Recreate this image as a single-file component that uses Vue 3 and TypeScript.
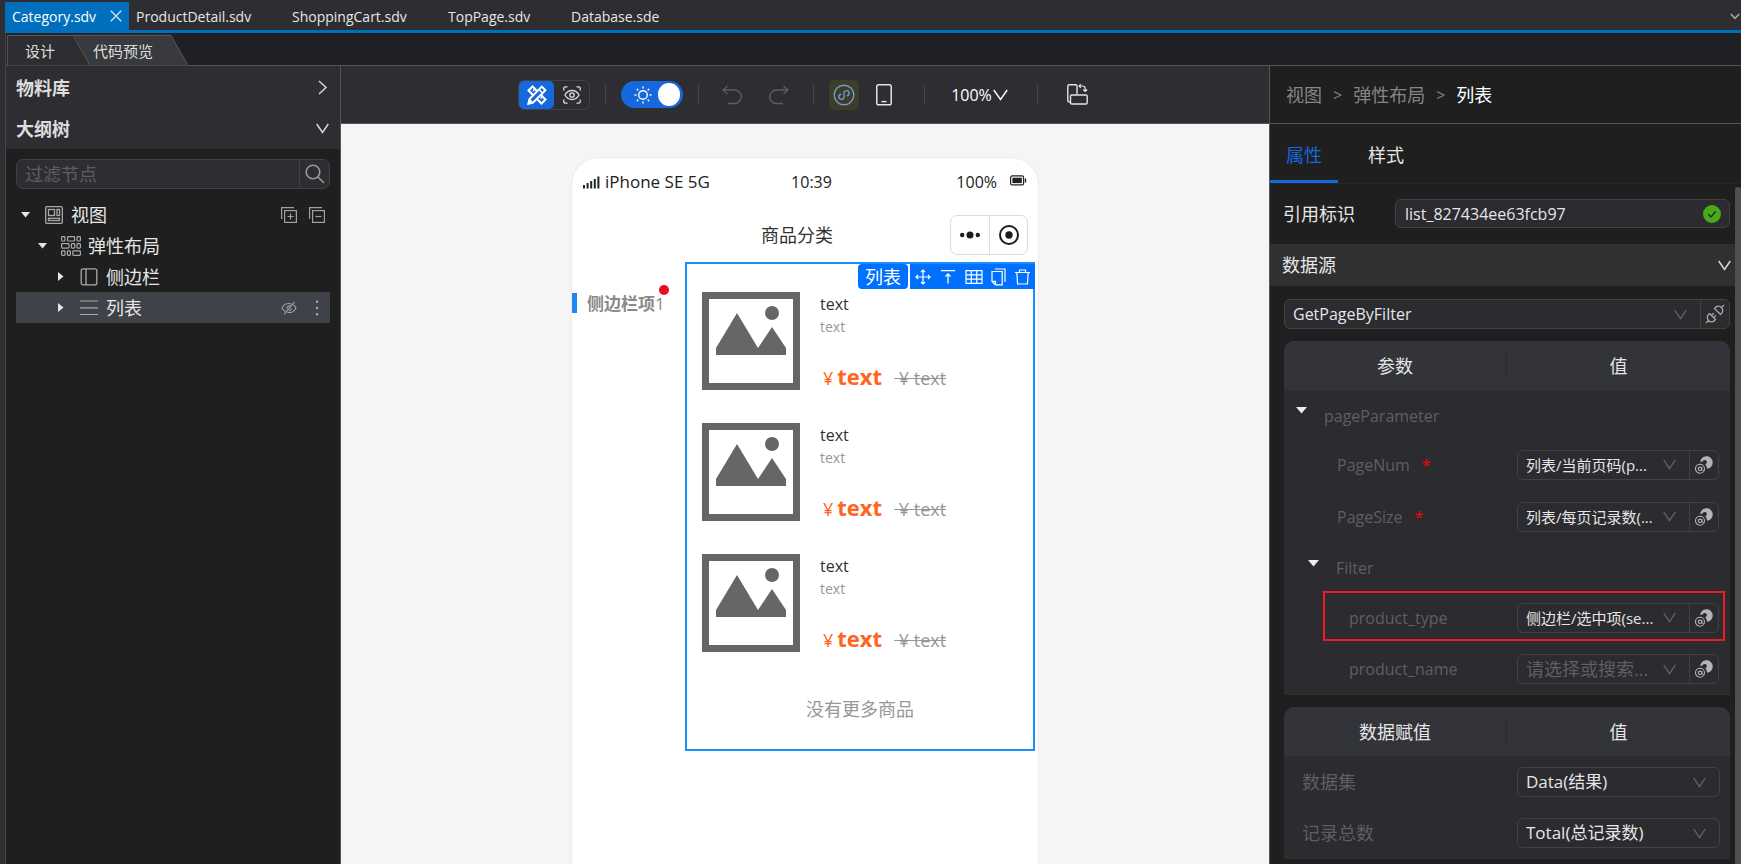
<script setup lang="ts">
import { ref } from 'vue'

interface FileTab { name: string; kind: string }
interface ParamRow { label: string; level: number; group?: boolean; required?: boolean; value?: string; muted?: boolean; marked?: boolean }

const files: FileTab[] = [
  { name: 'ProductDetail.sdv', kind: 'f1' },
  { name: 'ShoppingCart.sdv', kind: 'f2' },
  { name: 'TopPage.sdv', kind: 'f3' },
  { name: 'Database.sde', kind: 'f4' },
]

const params: ParamRow[] = [
  { label: 'pageParameter', level: 1, group: true },
  { label: 'PageNum', level: 2, required: true, value: '列表/当前页码(p...' },
  { label: 'PageSize', level: 2, required: true, value: '列表/每页记录数(...' },
  { label: 'Filter', level: 2, group: true },
  { label: 'product_type', level: 3, value: '侧边栏/选中项(se...', marked: true },
  { label: 'product_name', level: 3, value: '请选择或搜索...', muted: true },
]

const assigns = [
  { label: '数据集', value: 'Data(结果)' },
  { label: '记录总数', value: 'Total(总记录数)' },
]

const filterText = ref('')
const refId = ref('list_827434ee63fcb97')
const lightMode = ref(true)
</script>

<template>
  <div class="app">
    <nav class="files">
      <div class="file active">
        <a href="#">Category.sdv</a>
        <button class="plain" aria-label="关闭">
          <svg width="12" height="12" viewBox="0 0 12 12"><path d="M.8.8l10.4 10.4M11.2.8L.8 11.2" stroke="#cfe6f7" stroke-width="1.3" /></svg>
        </button>
      </div>
      <a v-for="f in files" :key="f.name" href="#" class="file" :class="f.kind">{{ f.name }}</a>
      <button class="plain more" aria-label="更多">
        <svg width="10" height="7" viewBox="0 0 10 7"><path d="M.8 1l4.2 4.4L9.2 1" fill="none" stroke="#a5a5a8" stroke-width="1.6" /></svg>
      </button>
    </nav>

    <div class="work">
      <div class="modes">
        <svg class="mode-shape" width="184" height="32" viewBox="0 0 184 32">
          <path d="M1 .5H67L84 31.5H1z" fill="#2d2d32" />
          <path d="M67 .5H165L182 31.5H84z" fill="#383a3e" />
          <path d="M1.500 32V1.500H165L182 31.500M67 1.500L84 31.500" fill="none" stroke="#55555a" />
        </svg>
        <div class="mode-list">
          <button class="plain">设计</button>
          <button class="plain second">代码预览</button>
        </div>
      </div>

      <div class="body">
        <aside class="left">
          <div class="heads">
            <button class="plain head">物料库
              <svg width="13" height="15" viewBox="0 0 13 15"><path d="M3 1l7 6.500L3 14" fill="none" stroke="#ddd" stroke-width="1.400" /></svg>
            </button>
            <button class="plain head">大纲树
              <svg width="13" height="11" viewBox="0 0 13 11"><path d="M.7 1l5.800 8.500L12.300 1" fill="none" stroke="#ddd" stroke-width="1.400" /></svg>
            </button>
          </div>
          <div class="search">
            <input v-model="filterText" type="text" placeholder="过滤节点" aria-label="过滤节点">
            <button class="plain" aria-label="搜索">
              <svg width="20" height="20" viewBox="0 0 20 20" fill="none" stroke="#9a9a9a" stroke-width="1.600"><circle cx="8" cy="8" r="6.800" /><path d="M13 13l6 6" /></svg>
            </button>
          </div>
          <ul class="tree">
            <li class="n1">
              <svg class="caret" width="9" height="6" viewBox="0 0 9 6"><path d="M0 0h9L4.500 5.500z" fill="#e6e6e6" /></svg>
              <svg class="ico" width="18" height="18" viewBox="0 0 18 18" fill="none" stroke="#a9a9a9" stroke-width="1.300"><rect x=".7" y=".7" width="16.600" height="16.600" rx="1" /><rect x="3.500" y="3.500" width="6" height="6" /><rect x="12" y="3.500" width="2.500" height="6" /><rect x="3.500" y="12.300" width="11" height="2.200" /></svg>
              <span>视图</span>
              <button class="plain tool first" aria-label="展开全部">
                <svg width="16" height="16" viewBox="0 0 16 16" fill="none" stroke="#a0a0a0" stroke-width="1.200"><path d="M.6 12V.6H13" /><rect x="3.600" y="3.600" width="11.800" height="11.800" /><path d="M9.500 6.500v6M6.500 9.500h6" /></svg>
              </button>
              <button class="plain tool" aria-label="收起全部">
                <svg width="16" height="16" viewBox="0 0 16 16" fill="none" stroke="#a0a0a0" stroke-width="1.200"><path d="M.6 12V.6H13" /><rect x="3.600" y="3.600" width="11.800" height="11.800" /><path d="M6.500 9.500h6" /></svg>
              </button>
            </li>
            <li class="n2">
              <svg class="caret" width="9" height="6" viewBox="0 0 9 6"><path d="M0 0h9L4.500 5.500z" fill="#e6e6e6" /></svg>
              <svg class="ico" width="20" height="20" viewBox="0 0 20 20" fill="none" stroke="#a9a9a9" stroke-width="1.200"><rect x=".6" y=".6" width="3.400" height="4.400" rx=".8" /><rect x="6.600" y=".6" width="7" height="4.400" rx=".8" /><rect x="16" y=".6" width="3.400" height="4.400" rx=".8" /><rect x=".6" y="7.700" width="7.400" height="4.400" rx=".8" /><rect x="10.400" y="7.700" width="3.400" height="4.400" rx=".8" /><rect x="16" y="7.700" width="3.400" height="4.400" rx=".8" /><rect x=".6" y="14.900" width="3.400" height="4.400" rx=".8" /><rect x="6.400" y="14.900" width="3" height="4.400" rx=".8" /><rect x="11.800" y="14.900" width="7.600" height="4.400" rx=".8" /></svg>
              <span>弹性布局</span>
            </li>
            <li class="n3">
              <svg class="caret" width="6" height="9" viewBox="0 0 6 9"><path d="M0 0v9L5.500 4.500z" fill="#e6e6e6" /></svg>
              <svg class="ico" width="18" height="18" viewBox="0 0 18 18" fill="none" stroke="#a9a9a9" stroke-width="1.300"><rect x="1.200" y=".9" width="15.600" height="16" rx="2" /><path d="M6 1v16" /></svg>
              <span>侧边栏</span>
            </li>
            <li class="n3 selected">
              <svg class="caret" width="6" height="9" viewBox="0 0 6 9"><path d="M0 0v9L5.500 4.500z" fill="#e6e6e6" /></svg>
              <svg class="ico" width="18" height="18" viewBox="0 0 18 18" stroke="#a9a9a9" stroke-width="1.200"><path d="M0 2h18M0 8.800h18M0 15.500h18" /></svg>
              <span>列表</span>
              <button class="plain tool first" aria-label="隐藏">
                <svg width="16" height="14" viewBox="0 0 16 14" fill="none" stroke="#a0a0a0" stroke-width="1.100"><path d="M10.500 3C6 1.600 2.500 4 1 7c.8 1.500 1.800 2.700 3.200 3.500M12.300 3.700C13.600 4.500 14.500 5.700 15 7c-1.500 3.200-5 5.200-8.700 4.200M13.500.8L3.200 13.200M9.800 5.400C8 4 5.500 5.500 6 7.800M10.200 7.200c0 1.400-1 2.400-2.400 2.400" /></svg>
              </button>
              <button class="plain tool" aria-label="更多操作">
                <svg width="16" height="16" viewBox="0 0 16 16" fill="#a9a9a9"><circle cx="8" cy="1.800" r="1.200" /><circle cx="8" cy="8" r="1.200" /><circle cx="8" cy="14.200" r="1.200" /></svg>
              </button>
            </li>
          </ul>
        </aside>

        <main class="center">
          <div class="toolbar">
            <div class="switcher">
              <button class="plain on" aria-label="设计模式">
                <svg width="20" height="20" viewBox="0 0 20 20" fill="none" stroke="#fff" stroke-width="2"><path d="M1.500 5.500l4-4 13 13-4 4z" /><path d="M8 4l-2 2M15.500 11.500l-2 2" stroke-width="1.400" /><path d="M14.800 1.600l3.600 3.600L6 17.600l-4.600 1.200L2.500 14z" fill="#1668dc" /><path d="M12 4.500L15.500 8M1.500 18.500l1-4 3 3z" stroke-width="1.500" fill="#fff" /></svg>
              </button>
              <button class="plain" aria-label="预览模式">
                <svg width="18" height="18" viewBox="0 0 18 18" fill="none" stroke="#ddd" stroke-width="1.300"><path d="M.8 4.500V2.300A1.500 1.500 0 0 1 2.300.8h2.200M13.500.8h2.200a1.500 1.500 0 0 1 1.500 1.500v2.200M17.200 13.500v2.200a1.500 1.500 0 0 1-1.500 1.500h-2.200M4.500 17.200H2.300a1.500 1.500 0 0 1-1.500-1.500v-2.200" /><path d="M2 9c3-6 11-6 14 0-3 6-11 6-14 0z" /><circle cx="9" cy="9" r="2.200" /></svg>
              </button>
            </div>
            <i class="sep s1"></i>
            <label class="toggle">
              <input v-model="lightMode" type="checkbox" aria-label="亮色模式">
              <svg width="18" height="18" viewBox="0 0 18 18" fill="none" stroke="#fff" stroke-width="1.400" stroke-linecap="round"><circle cx="9" cy="9" r="4.300" /><path d="M9 1v1M9 16v1M1 9h1M16 9h1M3.300 3.300l.6.6M14.100 14.100l.6.6M14.700 3.300l-.6.6M3.900 14.100l-.6.6" /></svg>
              <b></b>
            </label>
            <i class="sep s2"></i>
            <button class="plain undo" aria-label="撤销">
              <svg width="20" height="20" viewBox="0 0 20 20" fill="none" stroke="#5d5d60" stroke-width="1.400"><path d="M5.500 1L1 5l4.500 4M1 5h11.500a6.700 6.700 0 0 1 0 13.500H6" /></svg>
            </button>
            <button class="plain redo" aria-label="重做">
              <svg width="20" height="20" viewBox="0 0 20 20" fill="none" stroke="#5d5d60" stroke-width="1.400"><path d="M14.500 1L19 5l-4.500 4M19 5H7.500a6.700 6.700 0 0 0 0 13.500H14" /></svg>
            </button>
            <i class="sep s3"></i>
            <button class="plain mini" aria-label="小程序">
              <svg width="22" height="22" viewBox="0 0 22 22" fill="none" stroke="#7294d8" stroke-width="1.400"><circle cx="11" cy="11" r="9.800" /><path d="M8.300 10.200a2.600 2.600 0 1 0 2.700 3.100V8.700a2.600 2.600 0 1 1 2.700 3.100" /></svg>
            </button>
            <button class="plain device" aria-label="手机">
              <svg width="16" height="22" viewBox="0 0 16 22" fill="none" stroke="#e4e4e4" stroke-width="1.500"><rect x=".8" y=".8" width="14.400" height="20" rx="1.800" /><path d="M5.500 17.600h5" /></svg>
            </button>
            <i class="sep s4"></i>
            <button class="plain zoom">100%
              <svg width="15" height="12" viewBox="0 0 15 12"><path d="M.8 1l6.700 9.500L14.200 1" fill="none" stroke="#fff" stroke-width="1.400" /></svg>
            </button>
            <i class="sep s5"></i>
            <button class="plain rotate" aria-label="旋转">
              <svg width="21" height="21" viewBox="0 0 21 21" fill="none" stroke="#e4e4e4" stroke-width="1.400"><path d="M10 10V2.200A1.400 1.400 0 0 0 8.600.8H2.200A1.400 1.400 0 0 0 .8 2.200v14.400A1.400 1.400 0 0 0 2.200 18h.8" /><rect x="3.500" y="11" width="16.700" height="9" rx="1.300" /><path d="M12 2h3.500c1.800 0 2.700 1 2.700 2.700V7M13.800.3L12 2l1.800 1.800M16.200 5.500l2 2 2-2" stroke-width="1.200" /></svg>
            </button>
          </div>

          <div class="canvas">
            <div class="phone">
              <div class="status">
                <svg width="17" height="13" viewBox="0 0 17 13" fill="#222"><rect y="9" width="2" height="3.500" /><rect x="3.600" y="7" width="2" height="5.500" /><rect x="7.200" y="5" width="2" height="7.500" /><rect x="10.800" y="3" width="2" height="9.500" /><rect x="14.400" y=".5" width="2" height="12" /></svg>
                <span class="carrier">iPhone SE 5G</span>
                <span class="clock">10:39</span>
                <span class="power">100%</span>
                <svg class="battery" width="17" height="11" viewBox="0 0 17 11"><rect x=".6" y=".9" width="13" height="9" rx="1.500" fill="none" stroke="#222" stroke-width="1.200" /><rect x="2.400" y="2.700" width="9.400" height="5.400" fill="#222" /><path d="M15.500 3.500v4" stroke="#222" stroke-width="1.300" /></svg>
              </div>
              <div class="titlebar">
                <h1>商品分类</h1>
                <div class="capsule">
                  <button class="plain" aria-label="菜单"><svg width="20" height="8" viewBox="0 0 20 8" fill="#1c1c1c"><circle cx="2.200" cy="4" r="2.200" /><circle cx="10" cy="4" r="3.500" /><circle cx="17.800" cy="4" r="2.200" /></svg></button>
                  <button class="plain" aria-label="关闭小程序"><svg width="20" height="20" viewBox="0 0 20 20"><circle cx="10" cy="10" r="9" fill="none" stroke="#1c1c1c" stroke-width="2" /><circle cx="10" cy="10" r="3.700" fill="#1c1c1c" /></svg></button>
                </div>
              </div>
              <div class="stage">
                <div class="side">
                  <span class="side-item"><strong>侧边栏项</strong>1<i class="dot"></i></span>
                </div>
                <section class="list">
                  <div class="badge">
                    <span>列表</span>
                    <div class="ops">
                      <button class="plain" aria-label="移动"><svg width="16" height="16" viewBox="0 0 16 16" fill="none" stroke="#fff" stroke-width="1.200"><path d="M8 1v14M1 8h14M6 3l2-2 2 2M6 13l2 2 2-2M3 6L1 8l2 2M13 6l2 2-2 2" /></svg></button>
                      <button class="plain" aria-label="上移"><svg width="16" height="16" viewBox="0 0 16 16" fill="none" stroke="#fff" stroke-width="1.300"><path d="M1 1.700h14M8 14.500V5M5.500 7.500L8 5l2.500 2.500" /></svg></button>
                      <button class="plain" aria-label="表格"><svg width="18" height="16" viewBox="0 0 18 16" fill="none" stroke="#fff" stroke-width="1.200"><path d="M1 1.600h16v12.800H1zM1 5.800h16M1 10.100h16M6.300 1.600v12.800M11.700 1.600v12.800" /></svg></button>
                      <button class="plain" aria-label="复制"><svg width="15" height="18" viewBox="0 0 15 18" fill="none" stroke="#fff" stroke-width="1.200"><path d="M4 1h10v13M1 3.500h10.200v13.300H4.500L1 13.400zM1 13.400h3.500v3.400" /></svg></button>
                      <button class="plain" aria-label="删除"><svg width="15" height="16" viewBox="0 0 15 16" fill="none" stroke="#fff" stroke-width="1.200"><path d="M0 3.500h15M4.500 3.500V1h6v2.500M1.800 3.500L2.600 15h9.800l.8-11.500" /></svg></button>
                    </div>
                  </div>
                  <article v-for="n in 3" :key="n" class="goods">
                    <svg class="pic" width="98" height="98" viewBox="0 0 14 14"><rect x=".5" y=".5" width="13" height="13" fill="#fff" stroke="#666" /><path d="M2 9V8l3-5 3 5 2-3 2 3v1z" fill="#666" /><circle cx="10" cy="3" r="1" fill="#666" /></svg>
                    <div class="info">
                      <h2>text</h2>
                      <p>text</p>
                      <div class="price"><small>¥</small><strong>text</strong><del>&nbsp;¥ text</del></div>
                    </div>
                  </article>
                  <p class="end">没有更多商品</p>
                </section>
              </div>
            </div>
          </div>
        </main>

        <aside class="right">
          <nav class="crumbs"><a href="#">视图</a><i>&gt;</i><a href="#">弹性布局</a><i>&gt;</i><a href="#" class="here">列表</a></nav>
          <div class="tabs"><button class="plain current">属性</button><button class="plain">样式</button></div>
          <div class="panel">
            <div class="props">
              <div class="ident">
                <label for="ident">引用标识</label>
                <div class="ident-box">
                  <input id="ident" v-model="refId" type="text">
                  <svg width="18" height="18" viewBox="0 0 18 18"><circle cx="9" cy="9" r="9" fill="#49aa19" /><path d="M5.300 9.200l2.600 2.700 4.800-5.600" fill="none" stroke="#1f2b1a" stroke-width="1.400" /></svg>
                </div>
              </div>
              <button class="plain section">数据源
                <svg width="13" height="11" viewBox="0 0 13 11"><path d="M.7 1l5.800 8.500L12.300 1" fill="none" stroke="#ddd" stroke-width="1.400" /></svg>
              </button>
              <div class="source combo">
                <div class="pick">
                  <select aria-label="数据源"><option>GetPageByFilter</option></select>
                  <svg width="13" height="11" viewBox="0 0 13 11"><path d="M.7 1l5.800 8.500L12.300 1" fill="none" stroke="#66666a" stroke-width="1.300" /></svg>
                </div>
                <button class="plain" aria-label="连接">
                  <svg width="20" height="20" viewBox="0 0 20 20" fill="none" stroke="#aaa" stroke-width="1.300"><path d="M1 19l2.500-2.500M19 1l-2.500 2.500M4.500 9.500l6 6c-2 2.600-5 3.300-7 1s-1.500-5 1-7zM15.500 10.500l-6-6c2-2.600 5-3.300 7-1s1.500 5-1 7zM6.500 11.500l2.300-2.300M8.700 13.700l2.300-2.300" /></svg>
                </button>
              </div>

              <table>
                <thead><tr><th>参数</th><th>值</th></tr></thead>
                <tbody>
                  <tr v-for="p in params" :key="p.label" :class="{ group: p.group }">
                    <td :class="'level' + p.level">
                      <div class="name">
                        <button v-if="p.group" class="plain fold" aria-label="折叠"><svg width="11" height="7" viewBox="0 0 11 7"><path d="M0 0h11L5.500 6.500z" fill="#eee" /></svg></button>
                        <label :for="p.label">{{ p.label }}</label>
                        <em v-if="p.required">*</em>
                      </div>
                      <i v-if="p.marked" class="mark"></i>
                    </td>
                    <td>
                      <div v-if="p.value" class="combo small" :class="{ muted: p.muted }">
                        <div class="pick">
                          <select :id="p.label"><option>{{ p.value }}</option></select>
                          <svg width="13" height="11" viewBox="0 0 13 11"><path d="M.7 1l5.800 8.500L12.300 1" fill="none" stroke="#66666a" stroke-width="1.300" /></svg>
                        </div>
                        <button class="plain" aria-label="绑定">
                          <svg width="18" height="18" viewBox="0 0 18 18"><path d="M5.500 4.500a6.300 6.300 0 1 1 6.500 8.300 6 6 0 0 0-1.800-4.500c1.800-.7 2.300-3 .6-4.100-1.500-.8-3 0-3.400 1.600-.7-.2-1.300-.2-2.300 0 0-.5.200-.9.400-1.300z" fill="#b4b4b4" /><circle cx="5" cy="12.800" r="4.500" fill="none" stroke="#b4b4b4" stroke-width="1.100" /><circle cx="5" cy="12.800" r="1.700" fill="none" stroke="#b4b4b4" stroke-width="1.100" /><path d="M6.900 11v2.600c0 1 1.500 1.200 2 .2" fill="none" stroke="#b4b4b4" /></svg>
                        </button>
                      </div>
                    </td>
                  </tr>
                </tbody>
              </table>

              <table class="assign">
                <thead><tr><th>数据赋值</th><th>值</th></tr></thead>
                <tbody>
                  <tr v-for="a in assigns" :key="a.label">
                    <td><label :for="a.label">{{ a.label }}</label></td>
                    <td>
                      <div class="combo">
                        <div class="pick">
                          <select :id="a.label"><option>{{ a.value }}</option></select>
                          <svg width="13" height="11" viewBox="0 0 13 11"><path d="M.7 1l5.800 8.500L12.300 1" fill="none" stroke="#66666a" stroke-width="1.300" /></svg>
                        </div>
                      </div>
                    </td>
                  </tr>
                </tbody>
              </table>
            </div>
            <div class="scroll"><i></i></div>
          </div>
        </aside>
      </div>
    </div>
  </div>
</template>

<style>
html, body { margin: 0; background: #2d2d32; }
</style>

<style scoped>
* { box-sizing: border-box; }
.app { height: 100vh; overflow: hidden; display: flex; flex-direction: column; background: #2d2d32; color: #e6e6e6; font: 18px/24px "Open Sans", "Noto Sans CJK SC", sans-serif; }
.plain { background: none; border: 0; padding: 0; margin: 0; font: inherit; color: inherit; display: flex; align-items: center; justify-content: center; cursor: pointer; flex: none; }
svg { display: block; flex: none; }
i, em { font-style: normal; }
a { color: inherit; text-decoration: none; }
h1, h2, p, ul { margin: 0; padding: 0; font-weight: 400; }
input, select { font: inherit; color: inherit; outline: 0; border: 0; background: none; min-width: 0; margin: 0; }

.files { display: flex; flex: none; height: 33px; margin-left: 5px; padding-top: 2px; border-bottom: 3px solid #006fbd; box-shadow: 0 1px #47474b; font-size: 14px; line-height: 30px; }
.file { height: 28px; }
.file.active { display: flex; background: #006fbd; width: 124px; padding: 0 7px; justify-content: space-between; color: #fff; }
.f1 { margin-left: 7px; width: 156px; }
.f2 { width: 156px; }
.f3 { width: 123px; }
.more { margin: 0 1px 0 auto; }

.work { flex: 1; min-height: 0; margin-left: 5px; border-left: 1px solid #47474b; display: flex; flex-direction: column; }
.modes { display: grid; flex: none; height: 33px; padding-top: 1px; background: #1f2023; border-bottom: 1px solid #55555a; }
.mode-shape, .mode-list { grid-area: 1 / 1; }
.mode-list { display: flex; align-items: center; padding: 2px 0 0 19px; font-size: 15px; color: #ddd; }
.second { margin-left: 38px; }
.body { flex: 1; min-height: 0; display: flex; }

.left { flex: none; width: 335px; background: #1f1f1f; border-right: 1px solid #55555a; }
.heads { background: #2d2d32; padding-top: 1px; }
.head { width: 100%; height: 41px; padding: 0 11px 0 10px; justify-content: space-between; font-weight: 700; color: #ddd; }
.search { display: flex; margin: 10px 10px 0; height: 30px; background: #2d2d32; border: 1px solid #424245; border-radius: 7px; }
.search input { flex: 1; padding: 0 8px; }
.search input::placeholder { color: #5f5f63; opacity: 1; }
.search button { width: 30px; border-left: 1px solid #424245; }
.tree { list-style: none; margin: 10px 10px 0; }
.tree li { display: flex; align-items: center; height: 31px; padding-right: 5px; }
.tree span { flex: 1; }
.caret { margin-right: 15px; }
.ico { margin-right: 8px; }
.n1 { padding-left: 5px; }
.n2 { padding-left: 22px; }
.n2 .caret { margin-right: 14px; }
.n2 .ico { margin-right: 7px; }
.n3 { padding-left: 42px; }
.n3 .caret { margin-right: 16px; }
.selected { background: #3f4249; }
.tool.first { margin-right: 12px; }

.center { flex: 1; min-width: 0; display: flex; flex-direction: column; background: #f5f5f5; }
.toolbar { flex: none; height: 58px; background: #2d2d32; border-bottom: 1px solid #55555a; display: flex; align-items: center; justify-content: center; padding-right: 4px; }
.switcher { display: flex; height: 30px; border: 1px solid #424245; border-radius: 6px; }
.switcher button { width: 35px; border-radius: 5px; }
.switcher .on { background: #1668dc; }
.sep { width: 1px; height: 20px; background: #48484c; flex: none; }
.s1 { margin: 0 15px; }
.s2 { margin: 0 23px 0 15px; }
.s3 { margin: 0 15px 0 24px; }
.s4 { margin: 0 26px 0 32px; }
.s5 { margin: 0 29px; }
.redo { margin-left: 27px; }
.device { margin-left: 17px; }
.toggle { display: flex; align-items: center; width: 62px; height: 27px; border-radius: 14px; background: #1668dc; padding: 0 3px 0 13px; cursor: pointer; }
.toggle input { appearance: none; width: 0; height: 0; }
.toggle b { margin-left: auto; width: 22px; height: 23px; border-radius: 12px; background: #fff; }
.mini { width: 30px; height: 30px; border-radius: 5px; background: #3c3e28; }
.zoom { color: #fff; font-size: 16px; gap: 1px; }

.canvas { flex: 1; min-height: 0; display: flex; justify-content: center; padding-top: 33px; overflow: hidden; }
.phone { width: 468px; background: #fff; border: 1px solid #ececf0; border-bottom: 0; border-radius: 28px 28px 0 0; color: #222; }
.status { display: grid; grid-template-columns: 17px 1fr auto 1fr 17px; align-items: center; height: 48px; padding: 0 11px; font-size: 16px; }
.carrier { padding-left: 5px; font-size: 17px; }
.clock { padding-left: 13px; }
.power { text-align: right; padding-right: 13px; }
.battery { margin-bottom: 4px; }
.titlebar { display: grid; grid-template-columns: 1fr auto 1fr; align-items: center; height: 56px; padding: 2px 10px 0 0; }
.titlebar h1 { grid-column: 2; padding-right: 6px; font-size: 18px; line-height: 24px; color: #323233; }
.capsule { justify-self: end; display: flex; height: 40px; border: 1px solid #dcdcdc; border-radius: 7px; }
.capsule button { width: 38px; }
.capsule button + button { border-left: 1px solid #dcdcdc; }
.stage { display: flex; }
.side { flex: 1; padding-top: 29px; }
.side-item { position: relative; display: inline-block; border-left: 5px solid #1989fa; padding-left: 10px; height: 20px; line-height: 22px; font-size: 17px; color: #8a8a8a; }
.dot { position: absolute; top: -8px; right: -4px; width: 10px; height: 10px; border-radius: 50%; background: #ee0a24; }
.list { position: relative; width: 350px; margin-right: 3px; border: 2px solid #1890ff; padding: 28px 15px 27px; display: flex; flex-direction: column; gap: 33px; }
.badge { position: absolute; top: 0; right: -2px; display: flex; gap: 2px; height: 25px; color: #fff; }
.badge span { background: #0070ff; border-radius: 4px; padding: 0 7px; line-height: 26px; }
.ops { display: flex; align-items: center; justify-content: space-between; width: 125px; padding: 0 5px; background: #0070ff; }
.goods { display: flex; gap: 20px; }
.info { display: flex; flex-direction: column; flex: 1; }
.info h2 { font-size: 16px; line-height: 24px; color: #323233; }
.info p { font-size: 14px; line-height: 22px; color: #969799; }
.price { display: flex; align-items: baseline; margin-top: auto; height: 27px; line-height: 26px; color: #ff6420; }
.price small { font-size: 18px; padding: 0 4px 0 3px; }
.price strong { font-size: 22px; }
.price del { margin-left: 12px; font-size: 18px; color: #969799; }
.end { margin-top: 12px; text-align: center; line-height: 24px; padding: 0 0 1px; color: #969799; }

.right { flex: none; width: 472px; border-left: 1px solid #55555a; background: #1f1f1f; display: flex; flex-direction: column; }
.crumbs { flex: none; height: 58px; border-bottom: 1px solid #55555a; padding: 0 16px; display: flex; align-items: center; gap: 11px; color: #858585; }
.crumbs i { font-size: 16px; }
.here { color: #fff; }
.tabs { flex: none; display: flex; height: 60px; border-bottom: 1px solid #262626; }
.tabs button { padding: 5px 16px 0; border-bottom: 3px solid transparent; margin-right: 14px; }
.tabs .current { color: #1668dc; border-color: #1668dc; }
.panel { flex: 1; min-height: 0; display: flex; overflow: hidden; }
.scroll { flex: none; width: 6px; padding-top: 3px; display: flex; }
.scroll i { width: 6px; background: #4f4f4f; border-radius: 3px 3px 0 0; }
.props { flex: 1; min-width: 0; padding-top: 15px; }
.ident { display: flex; align-items: center; padding: 0 5px 0 13px; }
.ident label { width: 112px; }
.ident-box { flex: 1; display: flex; align-items: center; height: 29px; background: #2b2b30; border: 1px solid #424245; border-radius: 6px; padding: 0 8px 0 9px; }
.ident-box input { flex: 1; padding: 0; font-size: 16px; }
.section { width: 100%; height: 42px; margin-top: 16px; padding: 0 4px 0 12px; justify-content: space-between; background: #303030; }
.source { margin: 13px 5px 0 14px; font-size: 16px; }
.combo { display: flex; height: 30px; border: 1px solid #424245; border-radius: 6px; background: #2b2b30; }
.combo > button { width: 29px; border-left: 1px solid #424245; }
.pick { flex: 1; min-width: 0; display: grid; align-items: center; }
.pick select, .pick svg { grid-area: 1 / 1; }
.pick select { appearance: none; width: 100%; height: 28px; padding: 0 32px 0 8px; border-radius: 6px; }
.pick svg { justify-self: end; margin-right: 13px; pointer-events: none; }
table { width: auto; margin: 12px 5px 0 14px; display: grid; border-radius: 10px 10px 0 0; overflow: hidden; background: #2b2b30; }
thead, tbody { display: block; }
tr { display: grid; grid-template-columns: 1fr 1fr; align-items: center; height: 52px; border-bottom: 1px solid #303034; }
th, td { padding: 0; font-weight: 400; text-align: left; }
thead tr { height: 50px; background: #333439; }
th { text-align: center; line-height: 28px; }
th:first-child { border-right: 1px solid #2b2b30; }
tr.group { height: 49px; }
tbody tr.group:first-child { height: 48px; }
tbody tr:last-child { height: 51px; }
td:first-child { color: #5f5f63; position: relative; }
td:last-child { padding: 0 11px 0 10px; }
.name { display: flex; align-items: center; font-size: 16px; }
.level1 { padding-left: 12px; }
.level2 { padding-left: 53px; }
.level3 { padding-left: 65px; }
.group .level2 { padding-left: 24px; }
.fold { margin: 0 17px 8px 0; }
.group label { padding-top: 2px; }
.name em { color: #f00; margin-left: 12px; }
.small { font-size: 15px; }
.muted { font-size: 18px; color: #5f5f63; }
.mark { position: absolute; left: 39px; top: -15px; width: 402px; height: 50px; border: 2px solid #ed1c24; z-index: 1; pointer-events: none; }
.assign td:first-child { padding-left: 18px; }
.assign td:last-child { padding-right: 10px; }
.assign tbody tr { height: 51px; }
.assign select { font-size: 17px; }
</style>
